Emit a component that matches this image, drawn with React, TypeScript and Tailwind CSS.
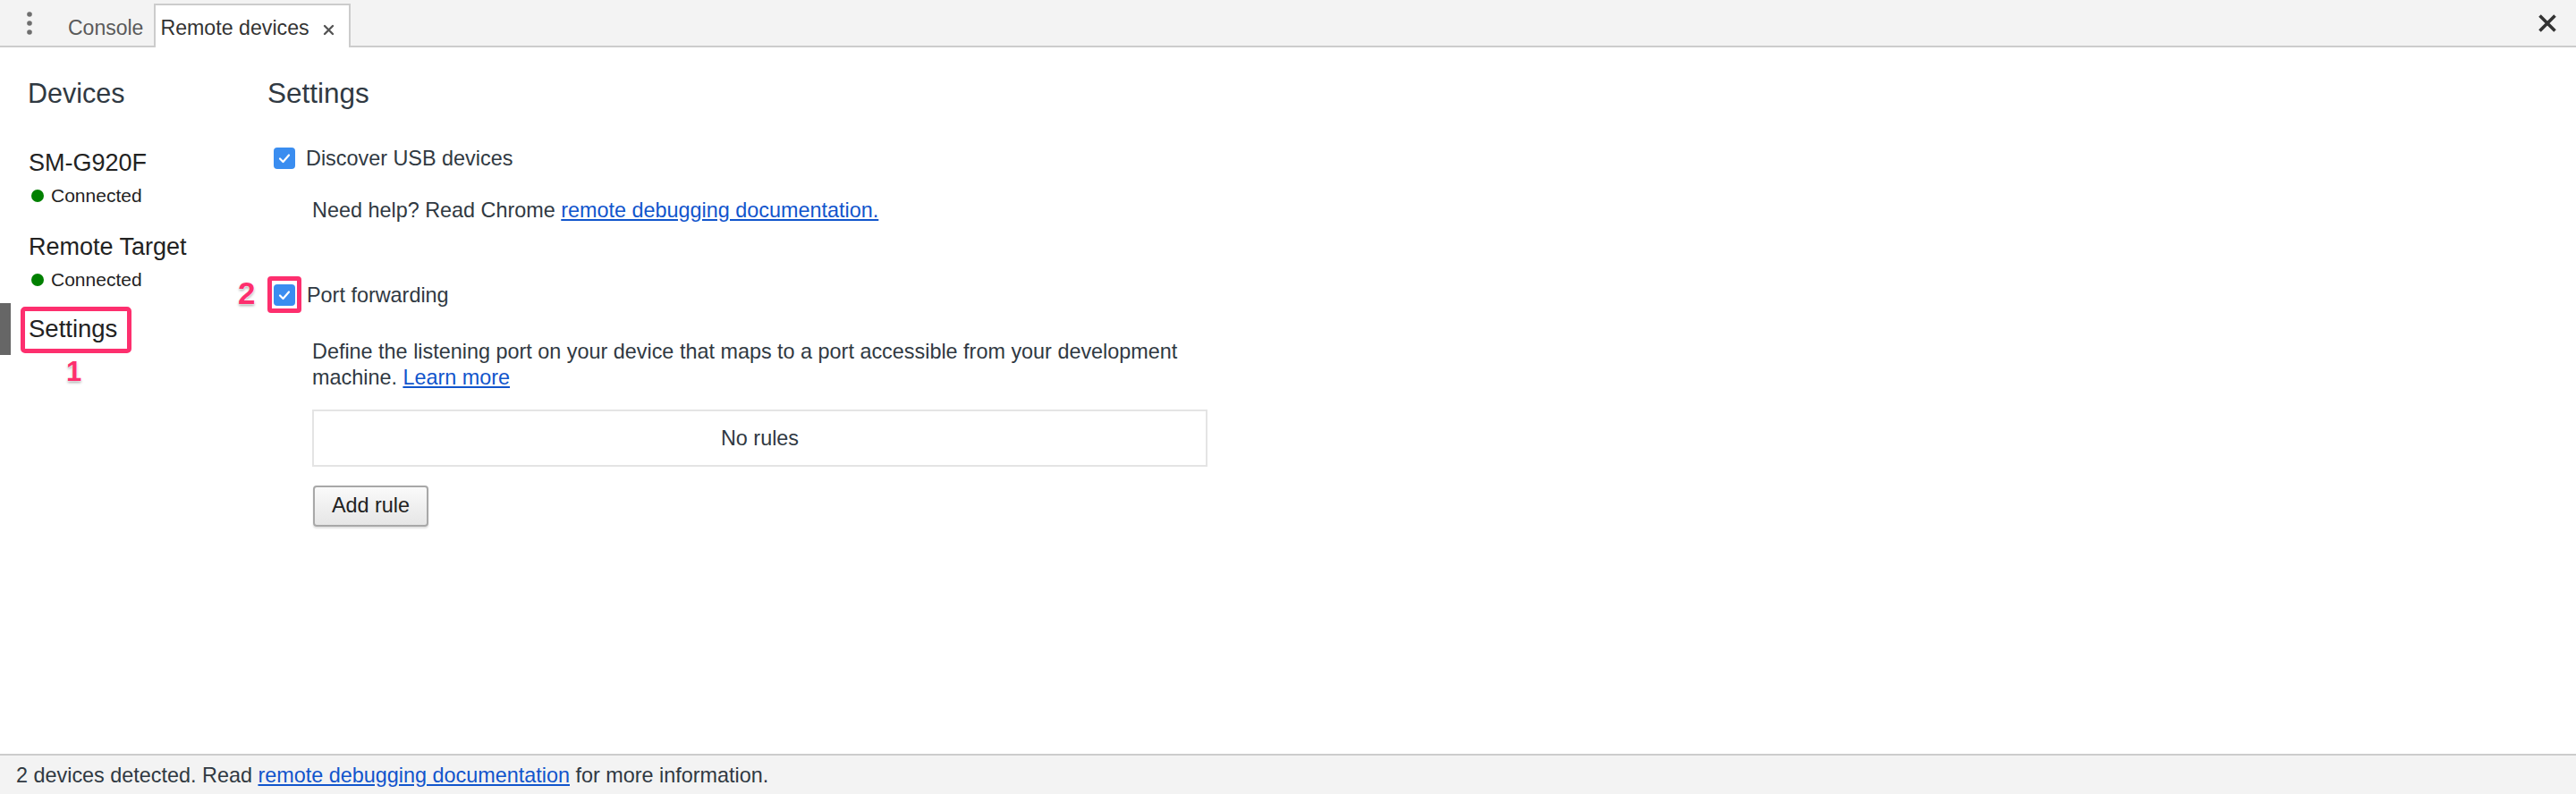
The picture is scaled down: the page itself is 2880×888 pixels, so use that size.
import React from "react"

const font = { fontFamily: '"Liberation Sans", Arial, sans-serif' }

function Checkbox() {
    return (
        <div className="w-[24px] h-[24px] rounded-[4px] bg-[#3a8df0] flex items-center justify-center shrink-0">
            <svg width="16" height="16" viewBox="0 0 16 16">
                <polyline points="3,8.5 6.5,12 13,4.5" fill="none" stroke="white" strokeWidth="2.2" strokeLinecap="round" strokeLinejoin="round" />
            </svg>
        </div>
    )
}

function Device({ name }: { name: string }) {
    return (
        <div className="pl-[32px]">
            <div className="text-[27px] leading-[32px] text-[#222222]">{name}</div>
            <div className="flex items-center mt-[8px] ml-[3px] gap-[8px]">
                <span className="w-[14px] h-[14px] rounded-full bg-[#008000]" />
                <span className="text-[21px] leading-[26px] text-[#222222]">Connected</span>
            </div>
        </div>
    )
}

export default function App() {
    return (
        <div style={font} className="w-[2880px] h-[888px] flex flex-col bg-white text-[#303942] overflow-hidden">
            {/* tab strip */}
            <div className="h-[53px] bg-[#f3f3f3] border-b-2 border-[#cccccc] flex items-end shrink-0 relative">
                <div className="w-[66px] h-full flex justify-center items-start pt-[13px]">
                    <svg width="8" height="26" viewBox="0 0 8 26">
                        <circle cx="4" cy="3" r="2.8" fill="#6e6e6e" />
                        <circle cx="4" cy="13" r="2.8" fill="#6e6e6e" />
                        <circle cx="4" cy="23" r="2.8" fill="#6e6e6e" />
                    </svg>
                </div>
                <div className="h-full pl-[10px] pr-[12px] pt-[17px] text-[23px] leading-[28px] text-[#5a5a5a]">Console</div>
                <div className="h-[49px] -mb-[2px] bg-white border-2 border-b-0 border-[#cccccc] pl-[5px] pr-[16px] pt-[11px] flex items-start gap-[15px]">
                    <span className="text-[23.2px] leading-[28px] text-[#333333]">Remote devices</span>
                    <svg className="mt-[10px]" width="13" height="13" viewBox="0 0 13 13">
                        <path d="M2 2 L11 11 M11 2 L2 11" stroke="#555555" strokeWidth="2.4" strokeLinecap="round" />
                    </svg>
                </div>
                <div className="ml-auto mr-[21px] self-start mt-[15px]">
                    <svg width="22" height="22" viewBox="0 0 22 22">
                        <path d="M2.5 2.5 L19.5 19.5 M19.5 2.5 L2.5 19.5" stroke="#333333" strokeWidth="3.6" />
                    </svg>
                </div>
            </div>

            <div className="flex-1 flex">
                {/* sidebar */}
                <div className="w-[299px] shrink-0 flex flex-col">
                    <div className="pl-[31px] mt-[33px] text-[30.5px] leading-[36px] text-[#303942]">Devices</div>
                    <div className="mt-[44px]">
                        <Device name="SM-G920F" />
                    </div>
                    <div className="mt-[28px]">
                        <Device name="Remote Target" />
                    </div>
                    <div className="relative mt-[13px] h-[58px] border-l-[12px] border-[#666666] pl-[20px] flex items-center">
                        <span className="text-[27.5px] leading-[32px] text-[#222222]">Settings</span>
                        <div className="absolute left-[11px] top-[4px] w-[124px] h-[52px] border-[5px] border-[#fd2f6e] rounded-[5px]" />
                        <span className="absolute left-[62px] top-[62px] text-[31px] leading-[30px] font-bold text-[#fd2f6e] [text-shadow:0_0_2px_white,0_0_2px_white,0_2px_3px_rgba(0,0,0,0.35)]">1</span>
                    </div>
                </div>

                {/* settings panel */}
                <div className="flex-1 flex flex-col text-[23.4px]">
                    <div className="mt-[33px] text-[31.5px] leading-[36px]">Settings</div>
                    <div className="mt-[43px] ml-[7px] flex items-center gap-[12px] h-[24px]">
                        <Checkbox />
                        <span className="leading-[28px]">Discover USB devices</span>
                    </div>
                    <div className="mt-[32px] ml-[50px] leading-[28px]">
                        Need help? Read Chrome <a className="text-[#1155cc] underline" href="#">remote debugging documentation.</a>
                    </div>
                    <div className="mt-[69px] ml-[7px] flex items-center gap-[13px] h-[24px] relative">
                        <Checkbox />
                        <span className="leading-[28px]">Port forwarding</span>
                        <div className="absolute left-[-7px] top-[-9px] w-[38px] h-[41px] border-[5px] border-[#fd2f6e] rounded-[4px]" />
                        <span className="absolute left-[-40px] top-[-8px] text-[35px] leading-[36px] font-bold text-[#fd2f6e] [text-shadow:0_0_2px_white,0_0_2px_white,0_2px_3px_rgba(0,0,0,0.35)]">2</span>
                    </div>
                    <div className="mt-[37px] ml-[50px] w-[1001px] leading-[29.4px]">
                        Define the listening port on your device that maps to a port accessible from your development machine. <a className="text-[#1155cc] underline" href="#">Learn more</a>
                    </div>
                    <div className="mt-[20px] ml-[50px] w-[1001px] h-[64px] border-2 border-[#e4e4e4] flex items-center justify-center leading-[28px]">
                        No rules
                    </div>
                    <div className="mt-[21px] ml-[51px]">
                        <button className="w-[129px] h-[46px] rounded-[4px] border-2 border-[#a8a8a8] bg-gradient-to-b from-[#fafafa] to-[#e6e6e6] text-[23.4px] text-[#222222] shadow-[0_2px_2px_rgba(0,0,0,0.12)]">
                            Add rule
                        </button>
                    </div>
                </div>
            </div>

            {/* status bar */}
            <div className="h-[45px] shrink-0 bg-[#f3f3f3] border-t-2 border-[#cccccc] pl-[18px] flex items-center text-[23.4px] leading-[28px]">
                <span>
                    2 devices detected. Read <a className="text-[#1155cc] underline" href="#">remote debugging documentation</a> for more information.
                </span>
            </div>
        </div>
    )
}
